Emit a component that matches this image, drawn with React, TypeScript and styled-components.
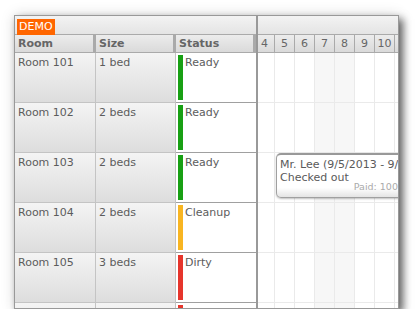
import React from "react";
import styled, { createGlobalStyle } from "styled-components";

const Global = createGlobalStyle`
  html, body { margin: 0; padding: 0; background: #fff; }
  body {
    font-family: "DejaVu Sans", Verdana, sans-serif;
    font-size: 11px;
    color: #666;
  }
  * { box-sizing: border-box; }
`;

const Page = styled.div`
  padding: 15px 0 0 14px;
`;

const Frame = styled.div`
  position: relative;
  width: 385px;
  height: 294px;
  border: 1px solid #999;
  display: flex;
  overflow: hidden;
  background: #fff;
  box-shadow: 4px 4px 8px rgba(0, 0, 0, 0.6), 0 0 14px rgba(0, 0, 0, 0.12);
`;

const DemoBadge = styled.div`
  position: absolute;
  left: 2px;
  top: 3px;
  height: 16px;
  padding: 0 2px;
  background: #ff6600;
  color: #fff;
  font-size: 11px;
  line-height: 16px;
  z-index: 2;
`;

const LeftPane = styled.div`
  width: 241px;
  flex-shrink: 0;
  display: flex;
  flex-direction: column;
  overflow: hidden;
`;

const Divider = styled.div`
  width: 2px;
  flex-shrink: 0;
  background: #999;
`;

const RightPane = styled.div`
  flex: 1;
  display: flex;
  flex-direction: column;
  overflow: hidden;
`;

const TopBar = styled.div`
  height: 19px;
  flex-shrink: 0;
  border-bottom: 1px solid #aaa;
  background: linear-gradient(to bottom, #f3f3f3, #e4e4e4);
`;

const HeaderRow = styled.div`
  height: 18px;
  flex-shrink: 0;
  display: flex;
  border-bottom: 1px solid #aaa;
  background: linear-gradient(to bottom, #ececec, #dadada);
`;

const ColHeader = styled.div<{ $w: number }>`
  width: ${(p) => p.$w}px;
  border-right: 3px solid #aaa;
  padding-left: 3px;
  font-weight: bold;
  line-height: 17px;
  color: #666;
  white-space: nowrap;
`;

const Row = styled.div`
  height: 50px;
  display: flex;
  flex-shrink: 0;
`;

const HeadCell = styled.div<{ $w: number }>`
  width: ${(p) => p.$w}px;
  border-right: 1px solid #c4c4c4;
  border-bottom: 1px solid #c4c4c4;
  background: linear-gradient(to bottom, #f4f4f4, #dddddd);
  padding: 3px 3px 0 3px;
  color: #5c5c5c;
  white-space: nowrap;
`;

const StatusCell = styled.div`
  width: 80px;
  background: #fff;
  border-bottom: 1px solid #a0a0a0;
  display: flex;
  gap: 2px;
  padding: 2px 0 2px 2px;
  color: #5c5c5c;
`;

const StatusBar = styled.div<{ $color: string }>`
  width: 5px;
  align-self: stretch;
  background: ${(p) => p.$color};
`;

const StatusText = styled.div`
  padding-top: 1px;
`;

const Strip = styled.div`
  display: flex;
  flex-shrink: 0;
  margin-left: -3px;
`;

const TimeCell = styled.div`
  width: 20px;
  flex-shrink: 0;
  border-right: 1px solid #aaa;
  text-align: center;
  line-height: 17px;
  color: #666;
`;

const Grid = styled.div`
  position: relative;
  flex: 1;
  overflow: hidden;
`;

const GridCell = styled.div<{ $weekend: boolean }>`
  width: 20px;
  height: 50px;
  flex-shrink: 0;
  border-right: 1px solid #eaeaea;
  border-bottom: 1px solid #eaeaea;
  background: ${(p) => (p.$weekend ? "#f7f7f7" : "#fff")};
`;

const Event = styled.div`
  position: absolute;
  left: 18px;
  top: 100px;
  width: 140px;
  height: 45px;
  border: 1px solid #a0a0a0;
  border-top: 2px solid #999;
  border-radius: 5px;
  background: linear-gradient(to bottom, #fff 0%, #fff 78%, #e4e4e4 100%);
  box-shadow: 0 1px 2px rgba(0, 0, 0, 0.25);
  padding: 3px 0 0 3px;
  color: #5a5a5a;
  line-height: 13px;
  white-space: nowrap;
  overflow: hidden;
`;

const Paid = styled.div`
  position: absolute;
  right: 8px;
  bottom: 4px;
  font-size: 9.5px;
  color: #aaa;
`;

type Room = { name: string; size: string; status: string; color: string };

const rooms: Room[] = [
  { name: "Room 101", size: "1 bed", status: "Ready", color: "#18a014" },
  { name: "Room 102", size: "2 beds", status: "Ready", color: "#18a014" },
  { name: "Room 103", size: "2 beds", status: "Ready", color: "#18a014" },
  { name: "Room 104", size: "2 beds", status: "Cleanup", color: "#f8b522" },
  { name: "Room 105", size: "3 beds", status: "Dirty", color: "#e6352c" },
  { name: "Room 106", size: "2 beds", status: "Dirty", color: "#e6352c" },
];

const days = [4, 5, 6, 7, 8, 9, 10, 11];
const weekend = new Set([7, 8]);

export default function App() {
  return (
    <>
      <Global />
      <Page>
        <Frame>
          <DemoBadge>DEMO</DemoBadge>
          <LeftPane>
            <TopBar />
            <HeaderRow>
              <ColHeader $w={81}>Room</ColHeader>
              <ColHeader $w={80}>Size</ColHeader>
              <ColHeader $w={80}>Status</ColHeader>
            </HeaderRow>
            {rooms.map((r) => (
              <Row key={r.name}>
                <HeadCell $w={81}>{r.name}</HeadCell>
                <HeadCell $w={80}>{r.size}</HeadCell>
                <StatusCell>
                  <StatusBar $color={r.color} />
                  <StatusText>{r.status}</StatusText>
                </StatusCell>
              </Row>
            ))}
          </LeftPane>
          <Divider />
          <RightPane>
            <TopBar />
            <HeaderRow>
              <Strip>
                {days.map((d) => (
                  <TimeCell key={d}>{d < 11 ? d : ""}</TimeCell>
                ))}
              </Strip>
            </HeaderRow>
            <Grid>
              {rooms.map((r) => (
                <Strip key={r.name}>
                  {days.map((d) => (
                    <GridCell key={d} $weekend={weekend.has(d)} />
                  ))}
                </Strip>
              ))}
              <Event>
                Mr. Lee (9/5/2013 - 9/12/2013)
                <br />
                Checked out
                <Paid>Paid: 100%</Paid>
              </Event>
            </Grid>
          </RightPane>
        </Frame>
      </Page>
    </>
  );
}
